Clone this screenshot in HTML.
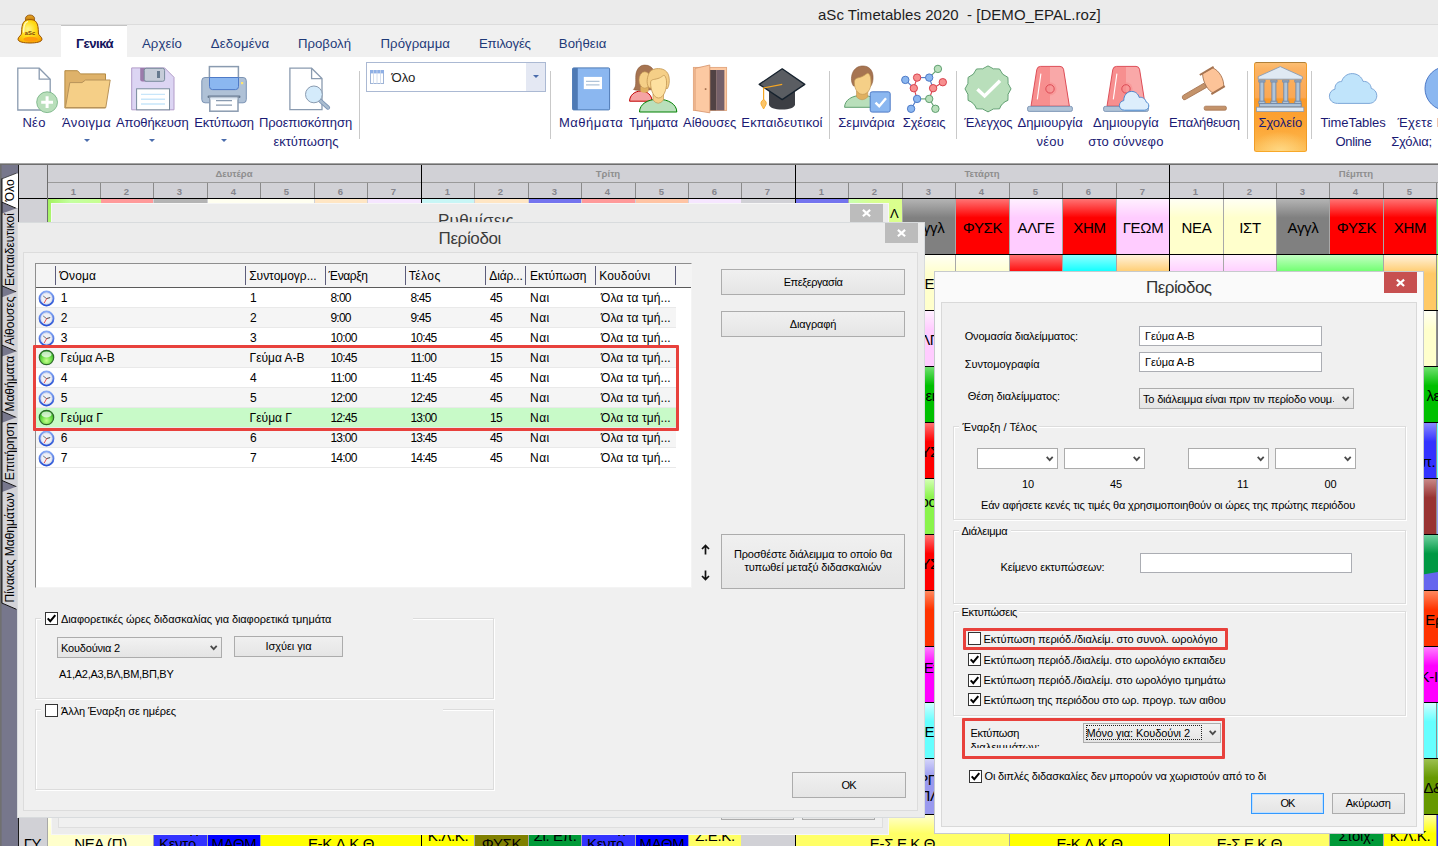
<!DOCTYPE html>
<html lang="el"><head><meta charset="utf-8"><title>aSc Timetables 2020 - [DEMO_EPAL.roz]</title>
<style>

html,body{margin:0;padding:0;}
body{width:1438px;height:846px;overflow:hidden;background:#fff;font-family:"Liberation Sans",sans-serif;}
#app{position:relative;width:1438px;height:846px;overflow:hidden;background:#fff;}
.abs{position:absolute;}
#titlebar{position:absolute;left:0;top:0;width:1438px;height:25px;background:#ebebeb;border-bottom:1px solid #dcdcdc;box-sizing:border-box;}
#titletext{position:absolute;left:818px;top:5px;font-size:15px;line-height:20px;color:#1e1e1e;white-space:pre;letter-spacing:0.03px;}
#tabrow{position:absolute;left:0;top:25px;width:1438px;height:32px;background:#f0f0f0;}
.tab{position:absolute;font-size:13.2px;line-height:17px;color:#1e3a78;white-space:nowrap;}
#tabactive{position:absolute;left:61px;top:0px;width:66px;height:32px;background:#fff;border-top:1px solid #c4c4c4;box-sizing:border-box;}
#ribbon{position:absolute;left:0;top:57px;width:1438px;height:106px;background:#fff;}
.rl{position:absolute;font-size:13px;line-height:19px;color:#1a1a74;white-space:nowrap;}
.rsep{position:absolute;top:14px;width:1px;height:68px;background:#c9c9c9;}
.ricon{position:absolute;}
.dd{position:absolute;width:0;height:0;border-left:3.3px solid transparent;border-right:3.3px solid transparent;border-top:3.3px solid #4a6cac;}
#combo{position:absolute;left:366px;top:5px;width:180px;height:30px;box-sizing:border-box;border:1px solid #abb9d3;background:#fff;}
#combo .btn{position:absolute;right:0;top:0;width:19px;height:28px;background:#e4e8f3;}
#combo .txt{position:absolute;left:24.5px;top:5.6px;font-size:13.2px;line-height:17px;color:#1e1e1e;}
#hl{position:absolute;left:1254px;top:5px;width:53px;height:90px;border-radius:2.5px;border:1px solid #f0a030;box-sizing:border-box;background:radial-gradient(ellipse 60% 22% at 50% 100%,rgba(255,226,150,0.75),rgba(255,226,150,0) 100%),linear-gradient(#fcbe72 0%,#fbb262 7%,#fba854 39%,#fb9a2a 41%,#fca434 70%,#fdbc52 100%);border-color:#b08038 #f09c28 #f8a828 #f09c28;}

#gridtop{position:absolute;left:0;top:163px;width:1438px;height:2px;background:#6e6e6e;border-top:1px solid #a4a4a4;box-sizing:border-box;}
#gridbg{position:absolute;left:0;top:165px;width:1438px;height:681px;background:#d1d1d6;}
.hd{position:absolute;font-weight:bold;color:#8e8e8e;text-align:center;white-space:nowrap;}
.vl{position:absolute;width:1px;}
.hl{position:absolute;height:1px;}
.cell{position:absolute;letter-spacing:-0.35px;font-size:15px;line-height:18px;color:#000;text-align:center;white-space:nowrap;overflow:hidden;box-sizing:border-box;}
.cell span{position:absolute;left:0;right:0;}
.vt{position:absolute;left:0;width:19px;font-size:13px;line-height:19px;color:#000;white-space:nowrap;}

.dlg{position:absolute;background:#ededed;box-sizing:border-box;}
.dlgin{position:absolute;background:#f0f0f0;border:1px solid #dcdcdc;box-sizing:border-box;}
.dtitle{position:absolute;font-size:17px;line-height:22px;color:#3c3c3c;white-space:nowrap;}
.xbtn{position:absolute;background:#bcbcbc;}
.wbtn{position:absolute;box-sizing:border-box;border:1px solid #acacac;background:linear-gradient(#f0f0f0,#e5e5e5);font-size:11px;line-height:13px;color:#000;text-align:center;white-space:nowrap;}
.wbtn span{position:absolute;left:0;right:0;}
.tx{position:absolute;font-size:11px;line-height:14px;color:#000;white-space:nowrap;}
.lt{position:absolute;font-size:12px;line-height:20px;color:#000;white-space:nowrap;}
.gb{position:absolute;box-sizing:border-box;border:1px solid #dcdcdc;box-shadow:1px 1px 0 #fff, inset 1px 1px 0 #fff;}
.cb{position:absolute;width:13px;height:13px;box-sizing:border-box;border:1px solid #333;background:#fff;}
.sel{position:absolute;box-sizing:border-box;border:1px solid #acacac;background:linear-gradient(#f2f2f2,#e4e4e4);}
.inp{position:absolute;box-sizing:border-box;border:1px solid #abadb3;background:#fff;}

.red{position:absolute;box-sizing:border-box;border:3px solid #e8413c;border-radius:1px;}

</style></head>
<body>
<div id="app">
<div id="titlebar"><div id="titletext">aSc Timetables 2020  - [DEMO_EPAL.roz]</div></div>
<div id="tabrow"><div id="tabactive"></div></div>
<div class="tab" style="left:76px;top:34.5px;letter-spacing:-0.503px;font-weight:bold;color:#13135c;">Γενικά</div>
<div class="tab" style="left:142px;top:34.5px;letter-spacing:0.071px;">Αρχείο</div>
<div class="tab" style="left:210.8px;top:34.5px;letter-spacing:0.192px;">Δεδομένα</div>
<div class="tab" style="left:298px;top:34.5px;letter-spacing:0.004px;">Προβολή</div>
<div class="tab" style="left:380.5px;top:34.5px;letter-spacing:0.066px;">Πρόγραμμα</div>
<div class="tab" style="left:479px;top:34.5px;letter-spacing:-0.211px;">Επιλογές</div>
<div class="tab" style="left:558.8px;top:34.5px;letter-spacing:0.038px;">Βοήθεια</div>
<div id="ribbon">
<div id="hl"></div>
<div class="rsep" style="left:359px"></div>
<div class="rsep" style="left:550px"></div>
<div class="rsep" style="left:829px"></div>
<div class="rsep" style="left:956px"></div>
<div class="rsep" style="left:1247px"></div>
<div class="rsep" style="left:1311px"></div>
<div id="combo"><div class="txt">Όλο</div><div class="btn"><div class="dd" style="left:7px;top:12px"></div></div></div>
</div>
<div class="rl" style="left:22.5px;top:113px;letter-spacing:0.226px;">Νέο</div>
<div class="rl" style="left:62px;top:113px;letter-spacing:0.346px;">Άνοιγμα</div>
<div class="rl" style="left:116px;top:113px;letter-spacing:-0.111px;">Αποθήκευση</div>
<div class="rl" style="left:194.3px;top:113px;letter-spacing:-0.264px;">Εκτύπωση</div>
<div class="rl" style="left:259px;top:113px;letter-spacing:-0.118px;">Προεπισκόπηση</div>
<div class="rl" style="left:273.4px;top:132px;letter-spacing:0.011px;">εκτύπωσης</div>
<div class="rl" style="left:559px;top:113px;letter-spacing:0.515px;">Μαθήματα</div>
<div class="rl" style="left:629px;top:113px;letter-spacing:-0.027px;">Τμήματα</div>
<div class="rl" style="left:683px;top:113px;letter-spacing:0.01px;">Αίθουσες</div>
<div class="rl" style="left:741.3px;top:113px;letter-spacing:0.186px;">Εκπαιδευτικοί</div>
<div class="rl" style="left:838.2px;top:113px;letter-spacing:0.063px;">Σεμινάρια</div>
<div class="rl" style="left:902.8px;top:113px;letter-spacing:-0.149px;">Σχέσεις</div>
<div class="rl" style="left:964.2px;top:113px;letter-spacing:-0.096px;">Έλεγχος</div>
<div class="rl" style="left:1017.4px;top:113px;letter-spacing:0.056px;">Δημιουργία</div>
<div class="rl" style="left:1036.6px;top:132px;letter-spacing:0.19px;">νέου</div>
<div class="rl" style="left:1092.9px;top:113px;letter-spacing:0.116px;">Δημιουργία</div>
<div class="rl" style="left:1088.3px;top:132px;letter-spacing:0.172px;">στο σύννεφο</div>
<div class="rl" style="left:1169px;top:113px;letter-spacing:-0.339px;">Επαλήθευση</div>
<div class="rl" style="left:1258.4px;top:113px;letter-spacing:-0.017px;">Σχολείο</div>
<div class="rl" style="left:1320.4px;top:113px;letter-spacing:-0.078px;">TimeTables</div>
<div class="rl" style="left:1335.6px;top:132px;letter-spacing:-0.363px;">Online</div>
<div class="rl" style="left:1391.2px;top:132px;letter-spacing:-0.174px;">Σχόλια;</div>
<div class="rl" style="left:1397.6px;top:113px;letter-spacing:0.3px">Έχετε Ε</div>
<div class="dd" style="left:84px;top:139px"></div>
<div class="dd" style="left:149px;top:139px"></div>
<div class="dd" style="left:221px;top:139px"></div>
<svg class="abs" style="left:14px;top:62px" width="48" height="54" viewBox="14 62 48 54" ><path d="M17.8 68.2H39.2L50.2 79.2V110H17.8Z" fill="#fff" stroke="#8a9bb0" stroke-width="1.3"/>
<path d="M39.2 68.2V79.2H50.2" fill="none" stroke="#8a9bb0" stroke-width="1.3"/>
<circle cx="47.1" cy="102.2" r="10.4" fill="#b9dfbb" stroke="#7ab588" stroke-width="0.9"/>
<path d="M47.1 96.3V108.1M41.2 102.2H53" stroke="#fff" stroke-width="3" fill="none"/></svg>
<svg class="abs" style="left:62px;top:62px" width="52" height="54" viewBox="62 62 52 54" ><path d="M64.9 70.7H77.5L80.5 73.9H105.5V108H64.9Z" fill="#deb26a" stroke="#b48a43" stroke-width="1"/>
<path d="M65.4 107.5L69.8 82.6H82L85.5 80H110.2L105.8 107.5Z" fill="#f5cf87" stroke="#b8935a" stroke-width="1"/></svg>
<svg class="abs" style="left:129px;top:62px" width="48" height="54" viewBox="129 62 48 54" ><path d="M131.7 67.9H164.6L174 77.3V109.8H131.7Z" fill="#dcd5f3" stroke="#b29cc9" stroke-width="1"/>
<path d="M140.2 67.9H147V81.5H142.2Q140.2 81.5 140.2 79.5Z" fill="#9c7bab"/>
<rect x="144.2" y="68.3" width="20.4" height="13" rx="2" fill="#c6ccd9" stroke="#788b9c" stroke-width="1"/>
<rect x="157" y="71" width="3" height="7" fill="#66798f"/>
<rect x="136.6" y="88.8" width="32.9" height="21" fill="#fff" stroke="#788b9c" stroke-width="1"/>
<path d="M141 94.4H165M141 99.2H165M141 104H165" stroke="#c8e6fa" stroke-width="1.4" fill="none"/></svg>
<svg class="abs" style="left:199px;top:62px" width="50" height="54" viewBox="199 62 50 54" ><rect x="209.4" y="66.6" width="29" height="14" fill="#fff" stroke="#8a9bb0" stroke-width="1.5"/>
<rect x="201.8" y="77.5" width="44.5" height="25.3" rx="3.2" fill="#afc1d6" stroke="#7b93b4" stroke-width="1"/>
<path d="M209.5 77.5H238.5V86.5Q238.5 89.6 235.5 89.6H212.5Q209.5 89.6 209.5 86.5Z" fill="#8bb7f0" stroke="#4e7ac7" stroke-width="1"/>
<rect x="241" y="82" width="2.2" height="2.2" fill="#ffe66e"/>
<rect x="207.5" y="95.6" width="33" height="2.4" rx="1.2" fill="#66798f"/>
<rect x="209.8" y="97" width="28.2" height="14.2" fill="#fff" stroke="#8a9bb0" stroke-width="1.5"/>
<rect x="210.4" y="97.6" width="27" height="2" fill="#dfe9f3"/>
<path d="M216 100.6H232M216 105.2H232" stroke="#8a9bb0" stroke-width="1.2" fill="none"/></svg>
<svg class="abs" style="left:286px;top:62px" width="48" height="54" viewBox="286 62 48 54" ><path d="M289.9 68.2H311.6L322 78.6V109.6H289.9Z" fill="#fff" stroke="#8a9bb0" stroke-width="1.3"/>
<path d="M311.6 68.2V78.6H322" fill="none" stroke="#8a9bb0" stroke-width="1.3"/>
<path d="M319.5 100L328 107.6" stroke="#7b93b4" stroke-width="4.2" stroke-linecap="round" fill="none"/>
<path d="M319.5 100L328 107.6" stroke="#a9bccf" stroke-width="2.6" stroke-linecap="round" fill="none"/>
<circle cx="313.9" cy="94.4" r="8.4" fill="#d4ebfb" stroke="#8a9bb0" stroke-width="1"/></svg>
<svg class="abs" style="left:570px;top:62px" width="44" height="54" viewBox="570 62 44 54" ><rect x="572.6" y="67.9" width="37" height="42" rx="1" fill="#8bb7f0" stroke="#4e7ab5" stroke-width="1"/>
<path d="M572.6 68.9Q572.6 67.9 573.6 67.9H577.8V109.9H573.6Q572.6 109.9 572.6 108.9Z" fill="#4e7ab5"/>
<rect x="583.8" y="76.9" width="18.2" height="12.2" fill="#fff"/>
<path d="M586 81.3H599.5M586 84.8H599.5" stroke="#b0c4d8" stroke-width="1.3" fill="none"/></svg>
<svg class="abs" style="left:627px;top:62px" width="52" height="54" viewBox="627 62 52 54" ><path d="M629.6 101.2C629.6 95 635 91 641 91C647 91 652 95 652 101.2Z" fill="#f5a3a3" stroke="#c00000" stroke-width="1"/>
<path d="M633.4 89.4C636.8 87 635.4 80 635.8 75.5C636.3 69.5 639.5 65.3 644.5 65.1C649 65 652 67 653.6 70.5C655 75 653.5 84 654 89C650 90.5 637 91 633.4 89.4Z" fill="#a67451" stroke="#8a5a3a" stroke-width="0.6"/>
<path d="M640.5 86.5V91.5Q644.5 94 648.5 91.5V86.5Z" fill="#e0b060"/>
<ellipse cx="644.8" cy="80" rx="5.8" ry="8.2" fill="#f5cf87" stroke="#c29653" stroke-width="0.6"/>
<path d="M639.5 112C639.5 104 648 99.2 658 99.2C668 99.2 676.8 104 676.8 112Z" fill="#b9dfbb" stroke="#008000" stroke-width="1"/>
<path d="M653 94V100Q658.2 106.5 663.5 100V94Z" fill="#f5cf87" stroke="#c29653" stroke-width="0.7"/>
<path d="M649.5 88C646 85 647 78 648.5 74.5C650 70 654 68.6 658.5 68.6C664 68.6 668 71.5 669 77C669.8 81.5 669 86 667.5 88.5Z" fill="#f5cf87" stroke="#c29653" stroke-width="0.8"/>
<path d="M650.6 83C650.6 79 653 80 658 78.5C662 77.3 663.5 74.5 664.5 75.5C666 77 666.6 80 666.6 83C666.6 90 663.5 98 658.6 98C653.6 98 650.6 90 650.6 83Z" fill="#fde0a0" stroke="#c29653" stroke-width="0.8"/></svg>
<svg class="abs" style="left:690px;top:62px" width="40" height="54" viewBox="690 62 40 54" ><rect x="693.4" y="67.4" width="33.2" height="43" fill="#fcc9a2" stroke="#e2a57c" stroke-width="0.9"/>
<rect x="709.8" y="70" width="6.4" height="40.4" fill="#514244"/>
<rect x="716.2" y="70" width="8.2" height="40.4" fill="#74606a"/>
<path d="M695 68.4L709.8 65V112.8L695 110.4Z" fill="#fcc9a2" stroke="#d99a73" stroke-width="0.9"/>
<rect x="704.8" y="88.2" width="1.6" height="1.8" fill="#a5714f"/></svg>
<svg class="abs" style="left:756px;top:62px" width="52" height="54" viewBox="756 62 52 54" ><path d="M769 90V104.5C769 107.5 775 109.6 782 109.6C789 109.6 795 107.5 795 104.5V90Z" fill="#3c3e44"/>
<path d="M782.2 68.8L804.8 84.4L782.2 99.6L759.2 84.4Z" fill="#5a5d62" stroke="#16222e" stroke-width="1.3" stroke-linejoin="round"/>
<path d="M782.2 84.4L763.6 88V100" fill="none" stroke="#f5a623" stroke-width="1.2"/>
<path d="M763.6 99.5C761 101 760.3 103 761.4 105L763.6 109L765.8 105C766.9 103 766.2 101 763.6 99.5Z" fill="#fbc56a" stroke="#f5a623" stroke-width="0.8"/></svg>
<svg class="abs" style="left:842px;top:62px" width="52" height="54" viewBox="842 62 52 54" ><path d="M844.6 107.3C844.6 100 852 95.4 862 95.4C872 95.4 879 100 879 107.3Z" fill="#b9dfbb" stroke="#5f9f70" stroke-width="1"/>
<path d="M856.5 91V97Q862 102.5 867.8 97V91Z" fill="#e0b060" stroke="#c29653" stroke-width="0.6"/>
<path d="M853.5 86C850.5 82 851 75 853.5 71C856 67 860 65.8 863.5 66C869 66.3 872.6 70 873 76C873.3 80 872.5 84 870.5 86.5Z" fill="#a67451" stroke="#8a5a3a" stroke-width="0.6"/>
<path d="M854.4 83C854.4 78 856.5 78.5 861 77C865.5 75.5 867 72.5 868.5 73.5C870.5 75 871 79 871 83C871 89 867.5 94.4 862.6 94.4C857.8 94.4 854.4 89 854.4 83Z" fill="#f5cf87" stroke="#c29653" stroke-width="0.7"/>
<rect x="870.2" y="91.8" width="20" height="20.3" rx="2" fill="#8bb7f0" stroke="#4e7ac7" stroke-width="1"/>
<path d="M875.5 102.6L879.2 106.2L886 98.2" fill="none" stroke="#fff" stroke-width="2.4"/></svg>
<svg class="abs" style="left:899px;top:62px" width="50" height="54" viewBox="899 62 50 54" ><path d="M917.1 77.6L929.2 77.6" stroke="#4e7ac7" stroke-width="1.1" fill="none"/><path d="M905.3 79.9L913.8 88.2" stroke="#4e7ac7" stroke-width="1.1" fill="none"/><path d="M917.1 77.6L913.8 88.2" stroke="#d9434e" stroke-width="1.1" fill="none"/><path d="M929.2 77.6L937.9 68.9" stroke="#5f9f70" stroke-width="1.1" fill="none"/><path d="M929.2 77.6L933.1 88.2" stroke="#4e7ac7" stroke-width="1.1" fill="none"/><path d="M933.1 88.2L942.8 82.2" stroke="#d9434e" stroke-width="1.1" fill="none"/><path d="M913.8 88.2L917.1 98.9" stroke="#d9434e" stroke-width="1.1" fill="none"/><path d="M933.1 88.2L929.2 98.9" stroke="#d9434e" stroke-width="1.1" fill="none"/><path d="M917.1 98.9L929.2 98.9" stroke="#5f9f70" stroke-width="1.1" fill="none"/><path d="M917.1 98.9L911.1 108.8" stroke="#4e7ac7" stroke-width="1.1" fill="none"/><path d="M929.2 98.9L935.4 108.8" stroke="#5f9f70" stroke-width="1.1" fill="none"/><circle cx="937.9" cy="68.9" r="3.7" fill="#b9dfbb" stroke="#5f9f70" stroke-width="1"/><circle cx="917.1" cy="77.6" r="3.7" fill="#f78f8f" stroke="#d9434e" stroke-width="1"/><circle cx="929.2" cy="77.6" r="3.7" fill="#8bb7f0" stroke="#4e7ac7" stroke-width="1"/><circle cx="905.3" cy="79.9" r="3.7" fill="#8bb7f0" stroke="#4e7ac7" stroke-width="1"/><circle cx="942.8" cy="82.2" r="3.7" fill="#f78f8f" stroke="#d9434e" stroke-width="1"/><circle cx="913.8" cy="88.2" r="3.7" fill="#f78f8f" stroke="#d9434e" stroke-width="1"/><circle cx="933.1" cy="88.2" r="3.7" fill="#f78f8f" stroke="#d9434e" stroke-width="1"/><circle cx="917.1" cy="98.9" r="3.7" fill="#8bb7f0" stroke="#4e7ac7" stroke-width="1"/><circle cx="929.2" cy="98.9" r="3.7" fill="#b9dfbb" stroke="#5f9f70" stroke-width="1"/><circle cx="911.1" cy="108.8" r="3.7" fill="#8bb7f0" stroke="#4e7ac7" stroke-width="1"/><circle cx="935.4" cy="108.8" r="3.7" fill="#b9dfbb" stroke="#5f9f70" stroke-width="1"/></svg>
<svg class="abs" style="left:962px;top:62px" width="52" height="54" viewBox="962 62 52 54" ><path d="M988.0 65.9Q993.0 70.2 999.5 69.0Q1001.7 75.2 1007.9 77.4Q1006.7 83.9 1011.0 88.9Q1006.7 93.9 1007.9 100.4Q1001.7 102.6 999.5 108.8Q993.0 107.6 988.0 111.9Q983.0 107.6 976.5 108.8Q974.3 102.6 968.1 100.4Q969.3 93.9 965.0 88.9Q969.3 83.9 968.1 77.4Q974.3 75.2 976.5 69.0Q983.0 70.2 988.0 65.9Z" fill="#b9dfbb" stroke="#5f9f70" stroke-width="1" stroke-linejoin="round"/><path d="M977.4 89.2L984.6 96L1000 80.8" fill="none" stroke="#fff" stroke-width="3.4"/></svg>
<svg class="abs" style="left:1025px;top:62px" width="50" height="54" viewBox="1025 62 50 54" ><path d="M1031 106.2L1036.8 69.5Q1037.4 66.4 1040.5 66.4H1060Q1063 66.4 1063.6 69.5L1069.4 106.2Z" fill="#f78f8f"/>
<path d="M1050 66.4H1060Q1063 66.4 1063.6 69.5L1069.4 106.2H1050Z" fill="#f9a8a8"/>
<circle cx="1050" cy="88.9" r="6.6" fill="#f78f8f" opacity="0.6"/>
<circle cx="1050" cy="88.9" r="4.2" fill="none" stroke="#d9434e" stroke-width="0.9"/>
<path d="M1031 106.2L1036.8 69.5Q1037.4 66.4 1040.5 66.4H1060Q1063 66.4 1063.6 69.5L1069.4 106.2Z" fill="none" stroke="#d9434e" stroke-width="0.9"/>
<path d="M1040.9 73.6L1037.3 99.3" stroke="#fff" stroke-width="1.1" fill="none"/>
<rect x="1027.6" y="106.4" width="44.8" height="5" rx="1.6" fill="#b0c4d8" stroke="#7b93b4" stroke-width="0.9"/></svg>
<svg class="abs" style="left:1101px;top:62px" width="52" height="54" viewBox="1101 62 52 54" ><path d="M1107 106.2L1112.8 69.5Q1113.4 66.4 1116.5 66.4H1136Q1139 66.4 1139.6 69.5L1145.4 106.2Z" fill="#f78f8f"/>
<path d="M1126 66.4H1136Q1139 66.4 1139.6 69.5L1145.4 106.2H1126Z" fill="#f9a8a8"/>
<circle cx="1126" cy="88.9" r="6.6" fill="#f78f8f" opacity="0.6"/>
<circle cx="1126" cy="88.9" r="4.2" fill="none" stroke="#d9434e" stroke-width="0.9"/>
<path d="M1107 106.2L1112.8 69.5Q1113.4 66.4 1116.5 66.4H1136Q1139 66.4 1139.6 69.5L1145.4 106.2Z" fill="none" stroke="#d9434e" stroke-width="0.9"/>
<path d="M1116.9 73.6L1113.3 99.3" stroke="#fff" stroke-width="1.1" fill="none"/>
<rect x="1103.6" y="106.4" width="44.8" height="5" rx="1.6" fill="#b0c4d8" stroke="#7b93b4" stroke-width="0.9"/><path d="M1124.5 110.2C1120.8 110.2 1119.4 107.6 1119.4 105.4C1119.4 103 1121.2 101 1123.8 100.6C1123.6 95.6 1127 91.4 1131.6 91.4C1135.4 91.4 1138.2 93.8 1139.2 97.4C1142.6 96.8 1145.4 98.8 1146 101.8C1148 102.6 1148.8 104.2 1148.8 106C1148.8 108.4 1147 110.2 1144.4 110.2Z" fill="#ddeefc" stroke="#4e8ad0" stroke-width="1"/></svg>
<svg class="abs" style="left:1180px;top:62px" width="50" height="54" viewBox="1180 62 50 54" ><path d="M1185.2 99.6L1206.6 87.4L1204 83.2L1183.4 95.2Q1181.6 96.6 1182.6 98.6Q1183.6 100.4 1185.2 99.6Z" fill="#c4936a" stroke="#a67451" stroke-width="0.9"/>
<path d="M1202.6 73.6L1212.6 67.8C1219.4 70.6 1224.4 79.4 1223.6 87L1213.6 92.8C1208.6 92 1202.6 82 1202.6 73.6Z" fill="#fcc398" stroke="#a67451" stroke-width="0.9"/>
<path d="M1199.8 75L1213.6 66.9" stroke="#a67451" stroke-width="2" fill="none"/>
<path d="M1211.4 94.2L1224.8 86.2" stroke="#a67451" stroke-width="2" fill="none"/>
<rect x="1204.2" y="106.2" width="22.2" height="4" rx="1.5" fill="#c4936a" stroke="#a67451" stroke-width="0.8"/></svg>
<svg class="abs" style="left:1255px;top:62px" width="50" height="54" viewBox="1255 62 50 54" ><path d="M1258.2 79.2V76.6L1280.3 66.6L1302.4 76.6V79.2Z" fill="#dfe9f3" stroke="#8a9bb0" stroke-width="0.9"/><rect x="1258.8000000000002" y="80.2" width="6.2" height="1.8" fill="#b0c4d8" stroke="#6f87a8" stroke-width="0.8"/><rect x="1259.9" y="82" width="4" height="19.4" fill="#b0c4d8" stroke="#6f87a8" stroke-width="0.9"/><rect x="1258.8000000000002" y="101.2" width="6.2" height="2.2" fill="#b0c4d8" stroke="#6f87a8" stroke-width="0.8"/><rect x="1270.8000000000002" y="80.2" width="6.2" height="1.8" fill="#b0c4d8" stroke="#6f87a8" stroke-width="0.8"/><rect x="1271.9" y="82" width="4" height="19.4" fill="#b0c4d8" stroke="#6f87a8" stroke-width="0.9"/><rect x="1270.8000000000002" y="101.2" width="6.2" height="2.2" fill="#b0c4d8" stroke="#6f87a8" stroke-width="0.8"/><rect x="1282.7" y="80.2" width="6.2" height="1.8" fill="#b0c4d8" stroke="#6f87a8" stroke-width="0.8"/><rect x="1283.8" y="82" width="4" height="19.4" fill="#b0c4d8" stroke="#6f87a8" stroke-width="0.9"/><rect x="1282.7" y="101.2" width="6.2" height="2.2" fill="#b0c4d8" stroke="#6f87a8" stroke-width="0.8"/><rect x="1294.8000000000002" y="80.2" width="6.2" height="1.8" fill="#b0c4d8" stroke="#6f87a8" stroke-width="0.8"/><rect x="1295.9" y="82" width="4" height="19.4" fill="#b0c4d8" stroke="#6f87a8" stroke-width="0.9"/><rect x="1294.8000000000002" y="101.2" width="6.2" height="2.2" fill="#b0c4d8" stroke="#6f87a8" stroke-width="0.8"/><rect x="1259.4" y="103.6" width="41.8" height="3.2" fill="#b0c4d8" stroke="#6f87a8" stroke-width="0.9"/><rect x="1256.6" y="107.2" width="47.2" height="4.2" fill="#dfe9f3" stroke="#8a9bb0" stroke-width="0.8"/></svg>
<svg class="abs" style="left:1327px;top:62px" width="52" height="54" viewBox="1327 62 52 54" ><path d="M1337.5 103.4C1332.4 103.4 1329.4 100 1329.4 96.2C1329.4 92.6 1331.8 89.8 1335 89.2C1334.6 84.4 1338 81.2 1341.6 81.6C1343 76.8 1347.2 73.6 1352.2 73.6C1357.6 73.6 1361.8 77 1363 81.4C1367.6 81 1371 84.2 1371.2 88.4C1374.6 89.2 1376.8 92.2 1376.8 95.6C1376.8 100 1373.6 103.4 1369 103.4Z" fill="#c0e4fb" stroke="#7fa8d8" stroke-width="1"/></svg>
<svg class="abs" style="left:1420px;top:62px" width="18" height="54" viewBox="1420 62 18 54" ><circle cx="1447" cy="88.5" r="22" fill="#8bb7f0" stroke="#4e7ac7" stroke-width="1"/></svg>
<svg class="abs" style="left:368px;top:68px" width="18" height="18" viewBox="368 68 18 18" ><rect x="370.5" y="70.5" width="13" height="13" fill="#fff" stroke="#9fb4d6" stroke-width="1"/>
<rect x="370" y="70" width="14" height="3.4" fill="#8fb0e6"/>
<path d="M373.5 70V84M377 70V84M380.5 70V84" stroke="#c9d6ea" stroke-width="0.8" fill="none"/></svg>
<svg class="abs" style="left:14px;top:12px" width="32" height="34" viewBox="14 12 32 34" ><defs><radialGradient id="bg1" cx="0.42" cy="0.4" r="0.8"><stop offset="0" stop-color="#fff68a"/><stop offset="0.4" stop-color="#ffdc18"/><stop offset="0.85" stop-color="#f8a400"/><stop offset="1" stop-color="#e88600"/></radialGradient>
<linearGradient id="bg2" x1="0" y1="0" x2="0" y2="1"><stop offset="0" stop-color="#eaa828"/><stop offset="1" stop-color="#b46c00"/></linearGradient></defs>
<ellipse cx="30" cy="18.7" rx="4.6" ry="3.7" fill="url(#bg2)" stroke="#8a4a00" stroke-width="0.8"/>
<path d="M21.6 33 C21.6 22.5 24 19.6 30 19.6 C36 19.6 38.4 22.5 38.4 33 C38.4 35.6 42 36.6 42 39.2 C42 42 36 43 30 43 C24 43 18 42 18 39.2 C18 36.6 21.6 35.6 21.6 33 Z" fill="url(#bg1)" stroke="#9a5200" stroke-width="1"/>
<ellipse cx="30.6" cy="39.2" rx="7.2" ry="2.5" fill="#ff960c" opacity="0.9"/>
<path d="M23.6 32C23.6 25.5 24.8 22.4 27.4 21.6" fill="none" stroke="#fffbd0" stroke-width="1.5" stroke-linecap="round" opacity="0.85"/>
<text x="30" y="35.2" font-family="Liberation Sans, sans-serif" font-size="5.8" font-weight="bold" fill="#7a3c08" text-anchor="middle">aSc</text></svg><div id="gridtop"></div><div id="gridbg"></div>
<svg class="abs" style="left:0;top:165px" width="19" height="681" viewBox="0 165 19 681"><rect x="0" y="165" width="19" height="681" fill="#77778c"/><rect x="0" y="165" width="1.6" height="681" fill="#707070"/><path d="M18 173.6L16 173.6L2 178.79999999999998V202.4L16 208.4L18 208.4Z" fill="#ffffff"/><path d="M2 202.20000000000002L16.4 208.4" stroke="#111" stroke-width="1" fill="none"/><path d="M2 178.79999999999998L16.4 173.2" stroke="#333" stroke-width="0.8" fill="none"/><path d="M18 208.4L16 208.4L2 213.6V286L16 292L18 292Z" fill="#d3d3d8"/><path d="M2 285.8L16.4 292" stroke="#111" stroke-width="1" fill="none"/><path d="M18 292L16 292L2 297.2V345.4L16 351.4L18 351.4Z" fill="#d3d3d8"/><path d="M2 345.2L16.4 351.4" stroke="#111" stroke-width="1" fill="none"/><path d="M18 351.4L16 351.4L2 356.59999999999997V411.5L16 417.5L18 417.5Z" fill="#d3d3d8"/><path d="M2 411.3L16.4 417.5" stroke="#111" stroke-width="1" fill="none"/><path d="M18 417.5L16 417.5L2 422.7V480.7L16 486.7L18 486.7Z" fill="#d3d3d8"/><path d="M2 480.5L16.4 486.7" stroke="#111" stroke-width="1" fill="none"/><path d="M18 486.7L16 486.7L2 491.9V603.3L16 609.3L18 609.3Z" fill="#d3d3d8"/><path d="M2 603.0999999999999L16.4 609.3" stroke="#111" stroke-width="1" fill="none"/><path d="M1.9 178.6V603.3" stroke="#111" stroke-width="1.1" fill="none"/><rect x="18" y="165" width="1" height="681" fill="#1a1a1a"/><text x="0" y="0" transform="translate(13.8 190.3) rotate(-90)" text-anchor="middle" font-family="Liberation Sans, sans-serif" font-size="12" fill="#000">Όλο</text><text x="0" y="0" transform="translate(13.8 249.5) rotate(-90)" text-anchor="middle" font-family="Liberation Sans, sans-serif" font-size="12" fill="#000">Εκπαιδευτικοί</text><text x="0" y="0" transform="translate(13.8 321.0) rotate(-90)" text-anchor="middle" font-family="Liberation Sans, sans-serif" font-size="12" fill="#000">Αίθουσες</text><text x="0" y="0" transform="translate(13.8 383.75) rotate(-90)" text-anchor="middle" font-family="Liberation Sans, sans-serif" font-size="12" fill="#000">Μαθήματα</text><text x="0" y="0" transform="translate(13.8 451.40000000000003) rotate(-90)" text-anchor="middle" font-family="Liberation Sans, sans-serif" font-size="12" fill="#000">Επιτήρηση</text><text x="0" y="0" transform="translate(13.8 547.3) rotate(-90)" text-anchor="middle" font-family="Liberation Sans, sans-serif" font-size="12" fill="#000">Πίνακας Μαθημάτων</text></svg>
<div class="hd" style="left:47px;top:167.9px;width:374px;font-size:9.5px;line-height:12px">Δευτέρα</div>
<div class="hd" style="left:47px;top:185.8px;width:53px;font-size:9.5px;line-height:12px;color:#85858c">1</div>
<div class="hd" style="left:100px;top:185.8px;width:53px;font-size:9.5px;line-height:12px;color:#85858c">2</div>
<div class="vl" style="left:100px;top:183px;height:15px;background:#8a8a8a"></div>
<div class="hd" style="left:153px;top:185.8px;width:53px;font-size:9.5px;line-height:12px;color:#85858c">3</div>
<div class="vl" style="left:153px;top:183px;height:15px;background:#8a8a8a"></div>
<div class="hd" style="left:207px;top:185.8px;width:53px;font-size:9.5px;line-height:12px;color:#85858c">4</div>
<div class="vl" style="left:207px;top:183px;height:15px;background:#8a8a8a"></div>
<div class="hd" style="left:260px;top:185.8px;width:53px;font-size:9.5px;line-height:12px;color:#85858c">5</div>
<div class="vl" style="left:260px;top:183px;height:15px;background:#8a8a8a"></div>
<div class="hd" style="left:314px;top:185.8px;width:53px;font-size:9.5px;line-height:12px;color:#85858c">6</div>
<div class="vl" style="left:314px;top:183px;height:15px;background:#8a8a8a"></div>
<div class="hd" style="left:367px;top:185.8px;width:53px;font-size:9.5px;line-height:12px;color:#85858c">7</div>
<div class="vl" style="left:367px;top:183px;height:15px;background:#8a8a8a"></div>
<div class="hd" style="left:421px;top:167.9px;width:374px;font-size:9.5px;line-height:12px">Τρίτη</div>
<div class="hd" style="left:421px;top:185.8px;width:53px;font-size:9.5px;line-height:12px;color:#85858c">1</div>
<div class="hd" style="left:474px;top:185.8px;width:53px;font-size:9.5px;line-height:12px;color:#85858c">2</div>
<div class="vl" style="left:474px;top:183px;height:15px;background:#8a8a8a"></div>
<div class="hd" style="left:528px;top:185.8px;width:53px;font-size:9.5px;line-height:12px;color:#85858c">3</div>
<div class="vl" style="left:528px;top:183px;height:15px;background:#8a8a8a"></div>
<div class="hd" style="left:581px;top:185.8px;width:53px;font-size:9.5px;line-height:12px;color:#85858c">4</div>
<div class="vl" style="left:581px;top:183px;height:15px;background:#8a8a8a"></div>
<div class="hd" style="left:635px;top:185.8px;width:53px;font-size:9.5px;line-height:12px;color:#85858c">5</div>
<div class="vl" style="left:635px;top:183px;height:15px;background:#8a8a8a"></div>
<div class="hd" style="left:688px;top:185.8px;width:53px;font-size:9.5px;line-height:12px;color:#85858c">6</div>
<div class="vl" style="left:688px;top:183px;height:15px;background:#8a8a8a"></div>
<div class="hd" style="left:741px;top:185.8px;width:53px;font-size:9.5px;line-height:12px;color:#85858c">7</div>
<div class="vl" style="left:741px;top:183px;height:15px;background:#8a8a8a"></div>
<div class="hd" style="left:795px;top:167.9px;width:374px;font-size:9.5px;line-height:12px">Τετάρτη</div>
<div class="hd" style="left:795px;top:185.8px;width:53px;font-size:9.5px;line-height:12px;color:#85858c">1</div>
<div class="hd" style="left:848px;top:185.8px;width:53px;font-size:9.5px;line-height:12px;color:#85858c">2</div>
<div class="vl" style="left:848px;top:183px;height:15px;background:#8a8a8a"></div>
<div class="hd" style="left:902px;top:185.8px;width:53px;font-size:9.5px;line-height:12px;color:#85858c">3</div>
<div class="vl" style="left:902px;top:183px;height:15px;background:#8a8a8a"></div>
<div class="hd" style="left:955px;top:185.8px;width:53px;font-size:9.5px;line-height:12px;color:#85858c">4</div>
<div class="vl" style="left:955px;top:183px;height:15px;background:#8a8a8a"></div>
<div class="hd" style="left:1009px;top:185.8px;width:53px;font-size:9.5px;line-height:12px;color:#85858c">5</div>
<div class="vl" style="left:1009px;top:183px;height:15px;background:#8a8a8a"></div>
<div class="hd" style="left:1062px;top:185.8px;width:53px;font-size:9.5px;line-height:12px;color:#85858c">6</div>
<div class="vl" style="left:1062px;top:183px;height:15px;background:#8a8a8a"></div>
<div class="hd" style="left:1116px;top:185.8px;width:53px;font-size:9.5px;line-height:12px;color:#85858c">7</div>
<div class="vl" style="left:1116px;top:183px;height:15px;background:#8a8a8a"></div>
<div class="hd" style="left:1169px;top:167.9px;width:374px;font-size:9.5px;line-height:12px">Πέμπτη</div>
<div class="hd" style="left:1169px;top:185.8px;width:53px;font-size:9.5px;line-height:12px;color:#85858c">1</div>
<div class="hd" style="left:1223px;top:185.8px;width:53px;font-size:9.5px;line-height:12px;color:#85858c">2</div>
<div class="vl" style="left:1223px;top:183px;height:15px;background:#8a8a8a"></div>
<div class="hd" style="left:1276px;top:185.8px;width:53px;font-size:9.5px;line-height:12px;color:#85858c">3</div>
<div class="vl" style="left:1276px;top:183px;height:15px;background:#8a8a8a"></div>
<div class="hd" style="left:1329px;top:185.8px;width:53px;font-size:9.5px;line-height:12px;color:#85858c">4</div>
<div class="vl" style="left:1329px;top:183px;height:15px;background:#8a8a8a"></div>
<div class="hd" style="left:1383px;top:185.8px;width:53px;font-size:9.5px;line-height:12px;color:#85858c">5</div>
<div class="vl" style="left:1383px;top:183px;height:15px;background:#8a8a8a"></div>
<div class="hd" style="left:1436px;top:185.8px;width:53px;font-size:9.5px;line-height:12px;color:#85858c">6</div>
<div class="vl" style="left:1436px;top:183px;height:15px;background:#8a8a8a"></div>
<div class="hl" style="left:47px;top:182px;width:1391px;background:#9a9a9a"></div>
<div class="hl" style="left:19px;top:198px;width:1419px;background:#000"></div>
<div class="vl" style="left:47px;top:165px;height:681px;background:#6e6e6e"></div>
<div class="hl" style="left:19px;top:254px;width:1419px;background:#000"></div>
<div class="hl" style="left:19px;top:310px;width:1419px;background:#000"></div>
<div class="hl" style="left:19px;top:366px;width:1419px;background:#000"></div>
<div class="hl" style="left:19px;top:422px;width:1419px;background:#000"></div>
<div class="hl" style="left:19px;top:478px;width:1419px;background:#000"></div>
<div class="hl" style="left:19px;top:534px;width:1419px;background:#000"></div>
<div class="hl" style="left:19px;top:590px;width:1419px;background:#000"></div>
<div class="hl" style="left:19px;top:646px;width:1419px;background:#000"></div>
<div class="hl" style="left:19px;top:702px;width:1419px;background:#000"></div>
<div class="hl" style="left:19px;top:758px;width:1419px;background:#000"></div>
<div class="hl" style="left:19px;top:814px;width:1419px;background:#000"></div>
<div class="abs" style="left:48px;top:199px;width:52px;height:5px;background:#b8ff88"></div>
<div class="abs" style="left:101px;top:199px;width:52px;height:5px;background:#ff9a9a"></div>
<div class="abs" style="left:154px;top:199px;width:53px;height:5px;background:#b4b4b4"></div>
<div class="abs" style="left:208px;top:199px;width:52px;height:5px;background:#fffff0"></div>
<div class="abs" style="left:260px;top:199px;width:54px;height:5px;background:#fffff0"></div>
<div class="abs" style="left:315px;top:199px;width:52px;height:5px;background:#ffe6c4"></div>
<div class="abs" style="left:368px;top:199px;width:53px;height:5px;background:#f6e6ff"></div>
<div class="abs" style="left:422px;top:199px;width:52px;height:5px;background:#c8f6f6"></div>
<div class="abs" style="left:475px;top:199px;width:53px;height:5px;background:#ffe6c4"></div>
<div class="abs" style="left:529px;top:199px;width:52px;height:5px;background:#7474ee"></div>
<div class="abs" style="left:582px;top:199px;width:53px;height:5px;background:#ff9a9a"></div>
<div class="abs" style="left:636px;top:199px;width:52px;height:5px;background:#ffc4a4"></div>
<div class="abs" style="left:689px;top:199px;width:52px;height:5px;background:#f6e6ff"></div>
<div class="abs" style="left:742px;top:199px;width:53px;height:5px;background:#d1d1d6"></div>
<div class="abs" style="left:796px;top:199px;width:52px;height:5px;background:#7474ee"></div>
<div class="abs" style="left:849px;top:199px;width:53px;height:5px;background:#d4ffb4"></div>
<div class="abs" style="left:48px;top:199px;width:53px;height:24px;background:linear-gradient(100deg,#a4f060 0%,#a8f468 6%,#c4ffa0 40%,#c8ff90 100%)"></div>
<div class="cell" style="left:848px;top:199px;width:54px;height:55px;background:linear-gradient(#ecffc8 0%,#d8ff90 34%,#d8ff90 100%);border-left:1px solid #a8a8a8;background:linear-gradient(100deg,#c8ffb0 0%,#d8ff90 40%,#dcff8c 100%);"></div>
<div class="abs" style="left:890px;top:205.6px;font-size:13px;line-height:15px;color:#000">Λ</div>
<div class="cell" style="left:902px;top:199px;width:53px;height:55px;background:linear-gradient(#b4b4b4 0%,#808080 34%,#808080 100%);border-left:1px solid #a8a8a8;"><span style="top:20px;left:0px;right:0px">Αγγλ</span></div>
<div class="cell" style="left:955px;top:199px;width:54px;height:55px;background:linear-gradient(#ff7474 0%,#ff0000 34%,#ff0000 100%);border-left:1px solid #a8a8a8;"><span style="top:20px;left:0px;right:0px">ΦΥΣΚ</span></div>
<div class="cell" style="left:1009px;top:199px;width:53px;height:55px;background:linear-gradient(#fff0ff 0%,#ffccff 34%,#ffccff 100%);border-left:1px solid #a8a8a8;"><span style="top:20px;left:0px;right:0px">ΑΛΓΕ</span></div>
<div class="cell" style="left:1062px;top:199px;width:54px;height:55px;background:linear-gradient(#ff7474 0%,#ff0000 34%,#ff0000 100%);border-left:1px solid #a8a8a8;"><span style="top:20px;left:0px;right:0px">ΧΗΜ</span></div>
<div class="cell" style="left:1116px;top:199px;width:53px;height:55px;background:linear-gradient(#fff0ff 0%,#ffccff 34%,#ffccff 100%);border-left:1px solid #a8a8a8;"><span style="top:20px;left:0px;right:0px">ΓΕΩΜ</span></div>
<div class="cell" style="left:1169px;top:199px;width:54px;height:55px;background:linear-gradient(#fffff4 0%,#ffffcc 34%,#ffffcc 100%);border-left:1px solid #a8a8a8;"><span style="top:20px;left:0px;right:0px">ΝΕΑ</span></div>
<div class="cell" style="left:1223px;top:199px;width:53px;height:55px;background:linear-gradient(#fffff4 0%,#ffffcc 34%,#ffffcc 100%);border-left:1px solid #a8a8a8;"><span style="top:20px;left:0px;right:0px">ΙΣΤ</span></div>
<div class="cell" style="left:1276px;top:199px;width:53px;height:55px;background:linear-gradient(#b4b4b4 0%,#808080 34%,#808080 100%);border-left:1px solid #a8a8a8;"><span style="top:20px;left:0px;right:0px">Αγγλ</span></div>
<div class="cell" style="left:1329px;top:199px;width:54px;height:55px;background:linear-gradient(#ff7474 0%,#ff0000 34%,#ff0000 100%);border-left:1px solid #a8a8a8;"><span style="top:20px;left:0px;right:0px">ΦΥΣΚ</span></div>
<div class="cell" style="left:1383px;top:199px;width:53px;height:55px;background:linear-gradient(#ff7474 0%,#ff0000 34%,#ff0000 100%);border-left:1px solid #a8a8a8;"><span style="top:20px;left:0px;right:0px">ΧΗΜ</span></div>
<div class="cell" style="left:902px;top:255px;width:53px;height:55px;background:linear-gradient(#fffff4 0%,#ffffcc 34%,#ffffcc 100%);border-left:1px solid #a8a8a8;"><span style="top:20px;left:0px;right:0px">ΝΕΑ</span></div>
<div class="cell" style="left:955px;top:255px;width:54px;height:55px;background:linear-gradient(#fffff4 0%,#ffffcc 34%,#ffffcc 100%);border-left:1px solid #a8a8a8;"></div>
<div class="cell" style="left:1009px;top:255px;width:53px;height:55px;background:linear-gradient(#ff7474 0%,#ff0000 34%,#ff0000 100%);border-left:1px solid #a8a8a8;"></div>
<div class="cell" style="left:1062px;top:255px;width:54px;height:55px;background:linear-gradient(#90ffff 0%,#00ffff 34%,#00ffff 100%);border-left:1px solid #a8a8a8;"></div>
<div class="cell" style="left:1116px;top:255px;width:53px;height:55px;background:linear-gradient(#fff2dc 0%,#ffc966 34%,#ffc966 100%);border-left:1px solid #a8a8a8;"></div>
<div class="cell" style="left:1169px;top:255px;width:54px;height:55px;background:linear-gradient(#fff0ff 0%,#ffccff 34%,#ffccff 100%);border-left:1px solid #a8a8a8;"></div>
<div class="cell" style="left:1223px;top:255px;width:53px;height:55px;background:linear-gradient(#fff0ff 0%,#ffccff 34%,#ffccff 100%);border-left:1px solid #a8a8a8;"></div>
<div class="cell" style="left:1276px;top:255px;width:53px;height:55px;background:linear-gradient(#c4ffc4 0%,#66ff66 34%,#66ff66 100%);border-left:1px solid #a8a8a8;"></div>
<div class="cell" style="left:1329px;top:255px;width:54px;height:55px;background:linear-gradient(#c4ffc4 0%,#66ff66 34%,#66ff66 100%);border-left:1px solid #a8a8a8;border-left:none;"></div>
<div class="cell" style="left:1383px;top:255px;width:53px;height:55px;background:linear-gradient(#fff2dc 0%,#ffc966 34%,#ffc966 100%);border-left:1px solid #a8a8a8;"></div>
<div class="cell" style="left:902px;top:311px;width:53px;height:55px;background:linear-gradient(#fff0ff 0%,#ffccff 34%,#ffccff 100%);border-left:1px solid #a8a8a8;"><span style="top:20px;left:0px;right:0px">ΑΛΓΕ</span></div>
<div class="cell" style="left:902px;top:367px;width:54px;height:55px;background:linear-gradient(#70e070 0%,#00c000 34%,#00c000 100%);border-left:1px solid #a8a8a8;"><span style="left:22.5px;right:auto;top:20px">ει</span></div>
<div class="cell" style="left:902px;top:423px;width:53px;height:55px;background:linear-gradient(#ff7474 0%,#ff0000 34%,#ff0000 100%);border-left:1px solid #a8a8a8;"><span style="top:20px;left:0px;right:0px">ΦΥΣΚ</span></div>
<div class="cell" style="left:902px;top:479px;width:54px;height:55px;background:linear-gradient(#d4ffb4 0%,#8af44c 34%,#8af44c 100%);border-left:1px solid #a8a8a8;"><span style="left:17.5px;right:auto;top:14px">οο</span></div>
<div class="cell" style="left:902px;top:535px;width:53px;height:55px;background:linear-gradient(#ff7474 0%,#ff0000 34%,#ff0000 100%);border-left:1px solid #a8a8a8;"><span style="top:20px;left:0px;right:0px">ΦΥΣΚ</span></div>
<div class="cell" style="left:902px;top:591px;width:53px;height:55px;background:linear-gradient(#ff8a60 0%,#ff3300 34%,#ff3300 100%);border-left:1px solid #a8a8a8;"></div>
<div class="cell" style="left:902px;top:647px;width:54px;height:55px;background:linear-gradient(#ff80ff 0%,#ff00ff 34%,#ff00ff 100%);border-left:1px solid #a8a8a8;"><span style="left:20.8px;right:auto;top:12px">Ετ</span></div>
<div class="cell" style="left:902px;top:703px;width:53px;height:55px;background:linear-gradient(#d0ffff 0%,#66ffff 34%,#66ffff 100%);border-left:1px solid #a8a8a8;"><span style="top:20px;left:0px;right:0px">ΝΕΑ</span></div>
<div class="cell" style="left:902px;top:759px;width:54px;height:55px;background:linear-gradient(#d4d4fa 0%,#9999ee 34%,#9999ee 100%);border-left:1px solid #a8a8a8;"><span style="left:15.2px;right:auto;top:11.6px">ΡΓ</span><span style="left:16.6px;right:auto;top:27.799999999999997px">ΠΛ</span></div>
<div class="cell" style="left:1383px;top:311px;width:53px;height:55px;background:linear-gradient(#fffff4 0%,#ffffcc 34%,#ffffcc 100%);border-left:1px solid #a8a8a8;"></div>
<div class="cell" style="left:1383px;top:367px;width:60px;height:55px;background:linear-gradient(#70e070 0%,#00c000 34%,#00c000 100%);border-left:1px solid #a8a8a8;"><span style="left:42.4px;right:auto;top:20px">λε</span></div>
<div class="cell" style="left:1383px;top:423px;width:53px;height:55px;background:linear-gradient(#8a8aff 0%,#3333ff 34%,#3333ff 100%);border-left:1px solid #a8a8a8;"><span style="left:37.6px;right:auto;top:29.5px">π.</span></div>
<div class="cell" style="left:1383px;top:479px;width:53px;height:55px;background:linear-gradient(#c88888 0%,#993333 34%,#993333 100%);border-left:1px solid #a8a8a8;"></div>
<div class="cell" style="left:1383px;top:535px;width:60px;height:55px;background:linear-gradient(#70d0a0 0%,#009944 34%,#009944 100%);border-left:1px solid #a8a8a8;"></div>
<div class="cell" style="left:1383px;top:591px;width:60px;height:55px;background:linear-gradient(#ff8a60 0%,#ff3300 34%,#ff3300 100%);border-left:1px solid #a8a8a8;"><span style="left:41.3px;right:auto;top:20px">Ερ</span></div>
<div class="cell" style="left:1383px;top:647px;width:60px;height:55px;background:linear-gradient(#ff80ff 0%,#ff00ff 34%,#ff00ff 100%);border-left:1px solid #a8a8a8;"><span style="left:35.6px;right:auto;top:21px">Κ-ΙΙ</span></div>
<div class="cell" style="left:1383px;top:703px;width:53px;height:55px;background:linear-gradient(#d0ffff 0%,#66ffff 34%,#66ffff 100%);border-left:1px solid #a8a8a8;"></div>
<div class="cell" style="left:1383px;top:759px;width:60px;height:55px;background:linear-gradient(#9cc050 0%,#669900 34%,#669900 100%);border-left:1px solid #a8a8a8;"><span style="left:39.4px;right:auto;top:20px">Δ&amp;</span></div>
<div class="abs" style="left:1437px;top:199px;width:1px;height:55px;background:#66ff66"></div>
<div class="vl" style="left:1436px;top:199px;height:55px;background:#8d8d8d"></div>
<div class="abs" style="left:1437px;top:255px;width:1px;height:55px;background:#d8ff90"></div>
<div class="vl" style="left:1436px;top:255px;height:55px;background:#8d8d8d"></div>
<div class="abs" style="left:1437px;top:311px;width:1px;height:55px;background:#808080"></div>
<div class="vl" style="left:1436px;top:311px;height:55px;background:#8d8d8d"></div>
<div class="abs" style="left:1437px;top:423px;width:1px;height:55px;background:#66ffff"></div>
<div class="vl" style="left:1436px;top:423px;height:55px;background:#8d8d8d"></div>
<div class="abs" style="left:1437px;top:479px;width:1px;height:55px;background:#9999ee"></div>
<div class="vl" style="left:1436px;top:479px;height:55px;background:#8d8d8d"></div>
<div class="abs" style="left:1437px;top:703px;width:1px;height:55px;background:#66ffff"></div>
<div class="vl" style="left:1436px;top:703px;height:55px;background:#8d8d8d"></div>
<div class="abs" style="left:1437px;top:815px;width:1px;height:55px;background:#3333ff"></div>
<div class="vl" style="left:1436px;top:815px;height:55px;background:#8d8d8d"></div>
<svg class="abs" style="left:1384px;top:535px" width="60" height="55"><path d="M0 46L60 36V55H0Z" fill="#6666ee"/></svg>
<div class="cell" style="left:47px;top:815px;width:106px;height:55px;background:linear-gradient(#fffff4 0%,#ffffcc 34%,#ffffcc 100%);border-left:1px solid #a8a8a8;"><span style="top:19.5px;left:0px;right:0px">ΝΕΑ (Π)</span></div>
<div class="cell" style="left:153px;top:815px;width:54px;height:55px;background:linear-gradient(#8a8aff 0%,#3333ff 34%,#3333ff 100%);border-left:1px solid #a8a8a8;"><span style="top:19.5px;left:-3px;right:3px">Κεντρ</span></div>
<div class="cell" style="left:207px;top:815px;width:53px;height:55px;background:linear-gradient(#6060ff 0%,#0000ff 34%,#0000ff 100%);border-left:1px solid #a8a8a8;"><span style="top:19.5px;left:0px;right:0px">ΜΑΘΜ</span></div>
<div class="cell" style="left:260px;top:815px;width:161px;height:55px;background:linear-gradient(#ffffa8 0%,#ffff00 34%,#ffff00 100%);border-left:1px solid #a8a8a8;"><span style="top:19.5px;left:0px;right:0px">Ε-Κ.Δ.Κ.Θ</span></div>
<div class="cell" style="left:421px;top:815px;width:53px;height:55px;background:linear-gradient(#ffffa8 0%,#ffff00 34%,#ffff00 100%);border-left:1px solid #a8a8a8;"><span style="top:11.7px;left:0px;right:0px">Κ.Λ.Κ.</span></div>
<div class="cell" style="left:474px;top:815px;width:54px;height:55px;background:linear-gradient(#b0b050 0%,#808000 34%,#808000 100%);border-left:1px solid #a8a8a8;"><span style="top:19.5px;left:0px;right:0px">ΦΥΣΚ</span></div>
<div class="cell" style="left:528px;top:815px;width:53px;height:55px;background:linear-gradient(#60d090 0%,#009a38 34%,#009a38 100%);border-left:1px solid #a8a8a8;"><span style="top:11.7px;left:0px;right:0px">Σι. Επ.</span></div>
<div class="cell" style="left:581px;top:815px;width:54px;height:55px;background:linear-gradient(#8a8aff 0%,#3333ff 34%,#3333ff 100%);border-left:1px solid #a8a8a8;"><span style="top:19.5px;left:-3px;right:3px">Κεντρ</span></div>
<div class="cell" style="left:635px;top:815px;width:53px;height:55px;background:linear-gradient(#6060ff 0%,#0000ff 34%,#0000ff 100%);border-left:1px solid #a8a8a8;"><span style="top:19.5px;left:0px;right:0px">ΜΑΘΜ</span></div>
<div class="cell" style="left:688px;top:815px;width:53px;height:55px;background:linear-gradient(#ffffd0 0%,#ffff66 34%,#ffff66 100%);border-left:1px solid #a8a8a8;"><span style="top:11.7px;left:0px;right:0px">Ζ.Ε.Κ.</span></div>
<div class="cell" style="left:741px;top:815px;width:54px;height:55px;background:linear-gradient(#d1d1d6 0%,#d1d1d6 34%,#d1d1d6 100%);border-left:1px solid #a8a8a8;border-left:1px solid #d1d1d6;"></div>
<div class="cell" style="left:795px;top:815px;width:214px;height:55px;background:linear-gradient(#ffffd0 0%,#ffff66 34%,#ffff66 100%);border-left:1px solid #a8a8a8;"><span style="top:19.5px;left:0px;right:0px">Ε-Σ.Ε.Κ.Θ</span></div>
<div class="cell" style="left:1009px;top:815px;width:160px;height:55px;background:linear-gradient(#ffffa8 0%,#ffff00 34%,#ffff00 100%);border-left:1px solid #a8a8a8;"><span style="top:19.5px;left:0px;right:0px">Ε-Κ.Δ.Κ.Θ</span></div>
<div class="cell" style="left:1169px;top:815px;width:160px;height:55px;background:linear-gradient(#ffffd0 0%,#ffff66 34%,#ffff66 100%);border-left:1px solid #a8a8a8;"><span style="top:19.5px;left:0px;right:0px">Ε-Σ.Ε.Κ.Θ</span></div>
<div class="cell" style="left:1329px;top:815px;width:54px;height:55px;background:linear-gradient(#60d090 0%,#009a38 34%,#009a38 100%);border-left:1px solid #a8a8a8;"><span style="top:11.7px;left:0px;right:0px">Στοιχ.</span></div>
<div class="cell" style="left:1383px;top:815px;width:53px;height:55px;background:linear-gradient(#ffffa8 0%,#ffff00 34%,#ffff00 100%);border-left:1px solid #a8a8a8;"><span style="top:11.7px;left:0px;right:0px">Κ.Λ.Κ.</span></div>
<div class="abs" style="left:190.2px;top:834.6px;width:2px;height:1.3px;background:#15153a"></div>
<div class="abs" style="left:195.8px;top:834.6px;width:2px;height:1.3px;background:#15153a"></div>
<div class="abs" style="left:617.8px;top:834.6px;width:2px;height:1.3px;background:#15153a"></div>
<div class="abs" style="left:623.4px;top:834.6px;width:2px;height:1.3px;background:#15153a"></div>
<div class="cell" style="left:19px;top:815px;width:28px;height:55px;"><span style="top:19.5px;left:-1px;">ΓΥ</span></div>
<div class="vl" style="left:421px;top:165px;height:681px;background:#000"></div>
<div class="vl" style="left:795px;top:165px;height:681px;background:#000"></div>
<div class="vl" style="left:1169px;top:165px;height:681px;background:#000"></div><div class="dlg" style="left:51px;top:203px;width:838px;height:632px;background:#ececec;border:1px solid #f6f6f6"></div>
<div class="dlgin" style="left:58px;top:233px;width:825px;height:595px;border-color:#dedede"></div>
<div class="dtitle" style="left:438px;top:210px;letter-spacing:0.25px">Ρυθμίσεις</div>
<div class="xbtn" style="left:850px;top:204px;width:33px;height:17.5px;background:#bcbcbc"><svg width="33" height="17.5" style="position:absolute;left:0;top:0"><path d="M12.9 5.8500000000000005L20.1 12.25M20.1 5.8500000000000005L12.9 12.25" stroke="#fff" stroke-width="2.2" fill="none"/></svg></div>
<div class="wbtn" style="left:721px;top:795px;width:73px;height:24.5px"></div>
<div class="wbtn" style="left:802px;top:795px;width:73px;height:24.5px"></div>
<div class="dlg" style="left:17px;top:221.5px;width:908px;height:596px;background:#ececec;border:1px solid rgba(200,205,210,0.55);"></div>
<div class="dlgin" style="left:23px;top:252px;width:895px;height:558.5px"></div>
<div class="dtitle" style="left:438.5px;top:227.6px;letter-spacing:-0.369px;">Περίοδοι</div>
<div class="xbtn" style="left:885px;top:223px;width:33px;height:19.5px;background:#bcbcbc"><svg width="33" height="19.5" style="position:absolute;left:0;top:0"><path d="M12.9 6.8500000000000005L20.1 13.25M20.1 6.8500000000000005L12.9 13.25" stroke="#fff" stroke-width="2.2" fill="none"/></svg></div>
<div class="abs" style="left:35px;top:263px;width:657px;height:325px;background:#fff;border:1px solid #8e8e8e;border-right-color:#f4f4f4;border-bottom-color:#f4f4f4;box-sizing:border-box"></div>
<div class="abs" style="left:36px;top:264px;width:655px;height:23px;background:#f4f4f4;border-bottom:1px solid #5a5a5a"></div>
<div class="abs" style="left:55px;top:266px;width:1px;height:19px;background:#5c5c7a"></div>
<div class="abs" style="left:245px;top:266px;width:1px;height:19px;background:#5c5c7a"></div>
<div class="abs" style="left:325px;top:266px;width:1px;height:19px;background:#5c5c7a"></div>
<div class="abs" style="left:405px;top:266px;width:1px;height:19px;background:#5c5c7a"></div>
<div class="abs" style="left:485px;top:266px;width:1px;height:19px;background:#5c5c7a"></div>
<div class="abs" style="left:525px;top:266px;width:1px;height:19px;background:#5c5c7a"></div>
<div class="abs" style="left:595px;top:266px;width:1px;height:19px;background:#5c5c7a"></div>
<div class="abs" style="left:675px;top:266px;width:1px;height:19px;background:#5c5c7a"></div>
<div class="lt" style="left:59.6px;top:265.5px;letter-spacing:0.134px;">Όνομα</div>
<div class="lt" style="left:249.2px;top:265.5px;letter-spacing:-0.02px;">Συντομογρ...</div>
<div class="lt" style="left:328.6px;top:265.5px;letter-spacing:-0.372px;">Έναρξη</div>
<div class="lt" style="left:408.8px;top:265.5px;letter-spacing:0.432px;">Τέλος</div>
<div class="lt" style="left:489.3px;top:265.5px;letter-spacing:-0.165px;">Διάρ...</div>
<div class="lt" style="left:530px;top:265.5px;letter-spacing:-0.059px;">Εκτύπωση</div>
<div class="lt" style="left:599.2px;top:265.5px;letter-spacing:0.177px;">Κουδούνι</div>
<div class="abs" style="left:36px;top:288px;width:640px;height:19px;background:#fff;border-bottom:1px solid #e9e9e9"></div>
<svg class="abs" style="left:37.7px;top:289.5px" width="17" height="17" viewBox="0 0 17 17"><defs><linearGradient id="ck0" x1="0" y1="0" x2="0" y2="1"><stop offset="0" stop-color="#86a8f4"/><stop offset="1" stop-color="#2a52d4"/></linearGradient></defs><circle cx="8.5" cy="8.5" r="6.9" fill="#eef1f8" stroke="url(#ck0)" stroke-width="2"/><circle cx="8.5" cy="8.5" r="5.6" fill="none" stroke="#c4cde6" stroke-width="0.7"/><path d="M8.4 8.6L12.2 7.6" stroke="#444" stroke-width="1" fill="none"/><path d="M8.6 8.6L5.2 6" stroke="#666" stroke-width="0.9" fill="none"/><path d="M8.9 8.2L6.2 13" stroke="#e84040" stroke-width="0.9" fill="none"/></svg>
<div class="lt" style="left:60.8px;top:287.7px;letter-spacing:-0.838px;">1</div>
<div class="lt" style="left:250px;top:287.7px;letter-spacing:-0.838px;">1</div>
<div class="lt" style="left:330.5px;top:287.7px;letter-spacing:-0.802px;">8:00</div>
<div class="lt" style="left:410.4px;top:287.7px;letter-spacing:-0.802px;">8:45</div>
<div class="lt" style="left:490.1px;top:287.7px;letter-spacing:-0.83px;">45</div>
<div class="lt" style="left:530px;top:287.7px;letter-spacing:0.473px;">Ναι</div>
<div class="lt" style="left:601px;top:287.7px;letter-spacing:0.095px;">Όλα τα τμή...</div>
<div class="abs" style="left:36px;top:308px;width:640px;height:19px;background:#f5f5f5;border-bottom:1px solid #e9e9e9"></div>
<svg class="abs" style="left:37.7px;top:309.5px" width="17" height="17" viewBox="0 0 17 17"><defs><linearGradient id="ck1" x1="0" y1="0" x2="0" y2="1"><stop offset="0" stop-color="#86a8f4"/><stop offset="1" stop-color="#2a52d4"/></linearGradient></defs><circle cx="8.5" cy="8.5" r="6.9" fill="#eef1f8" stroke="url(#ck1)" stroke-width="2"/><circle cx="8.5" cy="8.5" r="5.6" fill="none" stroke="#c4cde6" stroke-width="0.7"/><path d="M8.4 8.6L12.2 7.6" stroke="#444" stroke-width="1" fill="none"/><path d="M8.6 8.6L5.2 6" stroke="#666" stroke-width="0.9" fill="none"/><path d="M8.9 8.2L6.2 13" stroke="#e84040" stroke-width="0.9" fill="none"/></svg>
<div class="lt" style="left:60.8px;top:307.7px;letter-spacing:-0.838px;">2</div>
<div class="lt" style="left:250px;top:307.7px;letter-spacing:-0.838px;">2</div>
<div class="lt" style="left:330.5px;top:307.7px;letter-spacing:-0.802px;">9:00</div>
<div class="lt" style="left:410.4px;top:307.7px;letter-spacing:-0.802px;">9:45</div>
<div class="lt" style="left:490.1px;top:307.7px;letter-spacing:-0.83px;">45</div>
<div class="lt" style="left:530px;top:307.7px;letter-spacing:0.473px;">Ναι</div>
<div class="lt" style="left:601px;top:307.7px;letter-spacing:0.095px;">Όλα τα τμή...</div>
<div class="abs" style="left:36px;top:328px;width:640px;height:19px;background:#fff;border-bottom:1px solid #e9e9e9"></div>
<svg class="abs" style="left:37.7px;top:329.5px" width="17" height="17" viewBox="0 0 17 17"><defs><linearGradient id="ck2" x1="0" y1="0" x2="0" y2="1"><stop offset="0" stop-color="#86a8f4"/><stop offset="1" stop-color="#2a52d4"/></linearGradient></defs><circle cx="8.5" cy="8.5" r="6.9" fill="#eef1f8" stroke="url(#ck2)" stroke-width="2"/><circle cx="8.5" cy="8.5" r="5.6" fill="none" stroke="#c4cde6" stroke-width="0.7"/><path d="M8.4 8.6L12.2 7.6" stroke="#444" stroke-width="1" fill="none"/><path d="M8.6 8.6L5.2 6" stroke="#666" stroke-width="0.9" fill="none"/><path d="M8.9 8.2L6.2 13" stroke="#e84040" stroke-width="0.9" fill="none"/></svg>
<div class="lt" style="left:60.8px;top:327.7px;letter-spacing:-0.838px;">3</div>
<div class="lt" style="left:250px;top:327.7px;letter-spacing:-0.838px;">3</div>
<div class="lt" style="left:330.5px;top:327.7px;letter-spacing:-0.806px;">10:00</div>
<div class="lt" style="left:410.4px;top:327.7px;letter-spacing:-0.806px;">10:45</div>
<div class="lt" style="left:490.1px;top:327.7px;letter-spacing:-0.83px;">45</div>
<div class="lt" style="left:530px;top:327.7px;letter-spacing:0.473px;">Ναι</div>
<div class="lt" style="left:601px;top:327.7px;letter-spacing:0.095px;">Όλα τα τμή...</div>
<div class="abs" style="left:36px;top:348px;width:640px;height:19px;background:#f5f5f5;border-bottom:1px solid #e9e9e9"></div>
<svg class="abs" style="left:37.7px;top:349.4px" width="17" height="17" viewBox="0 0 17 17"><defs><radialGradient id="gb3" cx="0.5" cy="0.72" r="0.62"><stop offset="0" stop-color="#c8ff90"/><stop offset="0.55" stop-color="#72e04a"/><stop offset="1" stop-color="#2fae24"/></radialGradient></defs><circle cx="8.5" cy="8.5" r="7.2" fill="url(#gb3)" stroke="#2e6a2a" stroke-width="1.2"/><ellipse cx="8.5" cy="5.4" rx="5" ry="3" fill="#fff" opacity="0.7"/></svg>
<div class="lt" style="left:60.5px;top:347.7px;letter-spacing:-0.107px;">Γεύμα Α-Β</div>
<div class="lt" style="left:249.6px;top:347.7px;letter-spacing:-0.018px;">Γεύμα Α-Β</div>
<div class="lt" style="left:330.5px;top:347.7px;letter-spacing:-0.806px;">10:45</div>
<div class="lt" style="left:410.4px;top:347.7px;letter-spacing:-0.628px;">11:00</div>
<div class="lt" style="left:490.1px;top:347.7px;letter-spacing:-0.83px;">15</div>
<div class="lt" style="left:530px;top:347.7px;letter-spacing:0.473px;">Ναι</div>
<div class="lt" style="left:601px;top:347.7px;letter-spacing:0.095px;">Όλα τα τμή...</div>
<div class="abs" style="left:36px;top:368px;width:640px;height:19px;background:#fff;border-bottom:1px solid #e9e9e9"></div>
<svg class="abs" style="left:37.7px;top:369.5px" width="17" height="17" viewBox="0 0 17 17"><defs><linearGradient id="ck4" x1="0" y1="0" x2="0" y2="1"><stop offset="0" stop-color="#86a8f4"/><stop offset="1" stop-color="#2a52d4"/></linearGradient></defs><circle cx="8.5" cy="8.5" r="6.9" fill="#eef1f8" stroke="url(#ck4)" stroke-width="2"/><circle cx="8.5" cy="8.5" r="5.6" fill="none" stroke="#c4cde6" stroke-width="0.7"/><path d="M8.4 8.6L12.2 7.6" stroke="#444" stroke-width="1" fill="none"/><path d="M8.6 8.6L5.2 6" stroke="#666" stroke-width="0.9" fill="none"/><path d="M8.9 8.2L6.2 13" stroke="#e84040" stroke-width="0.9" fill="none"/></svg>
<div class="lt" style="left:60.8px;top:367.7px;letter-spacing:-0.838px;">4</div>
<div class="lt" style="left:250px;top:367.7px;letter-spacing:-0.838px;">4</div>
<div class="lt" style="left:330.5px;top:367.7px;letter-spacing:-0.628px;">11:00</div>
<div class="lt" style="left:410.4px;top:367.7px;letter-spacing:-0.628px;">11:45</div>
<div class="lt" style="left:490.1px;top:367.7px;letter-spacing:-0.83px;">45</div>
<div class="lt" style="left:530px;top:367.7px;letter-spacing:0.473px;">Ναι</div>
<div class="lt" style="left:601px;top:367.7px;letter-spacing:0.095px;">Όλα τα τμή...</div>
<div class="abs" style="left:36px;top:388px;width:640px;height:19px;background:#f5f5f5;border-bottom:1px solid #e9e9e9"></div>
<svg class="abs" style="left:37.7px;top:389.5px" width="17" height="17" viewBox="0 0 17 17"><defs><linearGradient id="ck5" x1="0" y1="0" x2="0" y2="1"><stop offset="0" stop-color="#86a8f4"/><stop offset="1" stop-color="#2a52d4"/></linearGradient></defs><circle cx="8.5" cy="8.5" r="6.9" fill="#eef1f8" stroke="url(#ck5)" stroke-width="2"/><circle cx="8.5" cy="8.5" r="5.6" fill="none" stroke="#c4cde6" stroke-width="0.7"/><path d="M8.4 8.6L12.2 7.6" stroke="#444" stroke-width="1" fill="none"/><path d="M8.6 8.6L5.2 6" stroke="#666" stroke-width="0.9" fill="none"/><path d="M8.9 8.2L6.2 13" stroke="#e84040" stroke-width="0.9" fill="none"/></svg>
<div class="lt" style="left:60.8px;top:387.7px;letter-spacing:-0.838px;">5</div>
<div class="lt" style="left:250px;top:387.7px;letter-spacing:-0.838px;">5</div>
<div class="lt" style="left:330.5px;top:387.7px;letter-spacing:-0.806px;">12:00</div>
<div class="lt" style="left:410.4px;top:387.7px;letter-spacing:-0.806px;">12:45</div>
<div class="lt" style="left:490.1px;top:387.7px;letter-spacing:-0.83px;">45</div>
<div class="lt" style="left:530px;top:387.7px;letter-spacing:0.473px;">Ναι</div>
<div class="lt" style="left:601px;top:387.7px;letter-spacing:0.095px;">Όλα τα τμή...</div>
<div class="abs" style="left:36px;top:408px;width:640px;height:19px;background:#c8fac8;border-bottom:1px solid #e9e9e9"></div>
<svg class="abs" style="left:37.7px;top:409.4px" width="17" height="17" viewBox="0 0 17 17"><defs><radialGradient id="gb6" cx="0.5" cy="0.72" r="0.62"><stop offset="0" stop-color="#c8ff90"/><stop offset="0.55" stop-color="#72e04a"/><stop offset="1" stop-color="#2fae24"/></radialGradient></defs><circle cx="8.5" cy="8.5" r="7.2" fill="url(#gb6)" stroke="#2e6a2a" stroke-width="1.2"/><ellipse cx="8.5" cy="5.4" rx="5" ry="3" fill="#fff" opacity="0.7"/></svg>
<div class="lt" style="left:60.5px;top:407.7px;letter-spacing:0.01px;">Γεύμα Γ</div>
<div class="lt" style="left:249.6px;top:407.7px;letter-spacing:0.01px;">Γεύμα Γ</div>
<div class="lt" style="left:330.5px;top:407.7px;letter-spacing:-0.806px;">12:45</div>
<div class="lt" style="left:410.4px;top:407.7px;letter-spacing:-0.806px;">13:00</div>
<div class="lt" style="left:490.1px;top:407.7px;letter-spacing:-0.83px;">15</div>
<div class="lt" style="left:530px;top:407.7px;letter-spacing:0.473px;">Ναι</div>
<div class="lt" style="left:601px;top:407.7px;letter-spacing:0.095px;">Όλα τα τμή...</div>
<div class="abs" style="left:36px;top:428px;width:640px;height:19px;background:#f5f5f5;border-bottom:1px solid #e9e9e9"></div>
<svg class="abs" style="left:37.7px;top:429.5px" width="17" height="17" viewBox="0 0 17 17"><defs><linearGradient id="ck7" x1="0" y1="0" x2="0" y2="1"><stop offset="0" stop-color="#86a8f4"/><stop offset="1" stop-color="#2a52d4"/></linearGradient></defs><circle cx="8.5" cy="8.5" r="6.9" fill="#eef1f8" stroke="url(#ck7)" stroke-width="2"/><circle cx="8.5" cy="8.5" r="5.6" fill="none" stroke="#c4cde6" stroke-width="0.7"/><path d="M8.4 8.6L12.2 7.6" stroke="#444" stroke-width="1" fill="none"/><path d="M8.6 8.6L5.2 6" stroke="#666" stroke-width="0.9" fill="none"/><path d="M8.9 8.2L6.2 13" stroke="#e84040" stroke-width="0.9" fill="none"/></svg>
<div class="lt" style="left:60.8px;top:427.7px;letter-spacing:-0.838px;">6</div>
<div class="lt" style="left:250px;top:427.7px;letter-spacing:-0.838px;">6</div>
<div class="lt" style="left:330.5px;top:427.7px;letter-spacing:-0.806px;">13:00</div>
<div class="lt" style="left:410.4px;top:427.7px;letter-spacing:-0.806px;">13:45</div>
<div class="lt" style="left:490.1px;top:427.7px;letter-spacing:-0.83px;">45</div>
<div class="lt" style="left:530px;top:427.7px;letter-spacing:0.473px;">Ναι</div>
<div class="lt" style="left:601px;top:427.7px;letter-spacing:0.095px;">Όλα τα τμή...</div>
<div class="abs" style="left:36px;top:448px;width:640px;height:19px;background:#fff;border-bottom:1px solid #e9e9e9"></div>
<svg class="abs" style="left:37.7px;top:449.5px" width="17" height="17" viewBox="0 0 17 17"><defs><linearGradient id="ck8" x1="0" y1="0" x2="0" y2="1"><stop offset="0" stop-color="#86a8f4"/><stop offset="1" stop-color="#2a52d4"/></linearGradient></defs><circle cx="8.5" cy="8.5" r="6.9" fill="#eef1f8" stroke="url(#ck8)" stroke-width="2"/><circle cx="8.5" cy="8.5" r="5.6" fill="none" stroke="#c4cde6" stroke-width="0.7"/><path d="M8.4 8.6L12.2 7.6" stroke="#444" stroke-width="1" fill="none"/><path d="M8.6 8.6L5.2 6" stroke="#666" stroke-width="0.9" fill="none"/><path d="M8.9 8.2L6.2 13" stroke="#e84040" stroke-width="0.9" fill="none"/></svg>
<div class="lt" style="left:60.8px;top:447.7px;letter-spacing:-0.838px;">7</div>
<div class="lt" style="left:250px;top:447.7px;letter-spacing:-0.838px;">7</div>
<div class="lt" style="left:330.5px;top:447.7px;letter-spacing:-0.806px;">14:00</div>
<div class="lt" style="left:410.4px;top:447.7px;letter-spacing:-0.806px;">14:45</div>
<div class="lt" style="left:490.1px;top:447.7px;letter-spacing:-0.83px;">45</div>
<div class="lt" style="left:530px;top:447.7px;letter-spacing:0.473px;">Ναι</div>
<div class="lt" style="left:601px;top:447.7px;letter-spacing:0.095px;">Όλα τα τμή...</div>
<div class="abs" style="left:33px;top:345px;width:646.4px;height:86px;border:3px solid #e8413c;box-sizing:border-box;border-radius:1px"></div>
<div class="wbtn" style="left:721px;top:269px;width:184px;height:25.5px;"><span style="top:6.3px;letter-spacing:-0.425px">Επεξεργασία</span></div>
<div class="wbtn" style="left:721px;top:311px;width:184px;height:25.5px;"><span style="top:6.3px;letter-spacing:-0.141px">Διαγραφή</span></div>
<div class="wbtn" style="left:721px;top:534px;width:184px;height:54.5px;"><span style="top:13.2px;letter-spacing:-0.196px">Προσθέστε διάλειμμα το οποίο θα</span><span style="top:26.2px;letter-spacing:-0.127px">τυπωθεί μεταξύ διδασκαλιών</span></div>
<div class="wbtn" style="left:792px;top:772px;width:113.5px;height:25.5px;"><span style="top:5.8px;letter-spacing:-0.653px">OK</span></div>
<svg class="abs" style="left:700.5px;top:544px" width="9" height="11" viewBox="0 0 9 11"><path d="M4.5 10.5V1.6M1 5L4.5 1.5L8 5" fill="none" stroke="#111" stroke-width="1.7"/></svg>
<svg class="abs" style="left:700.5px;top:570px" width="9" height="11" viewBox="0 0 9 11"><path d="M4.5 0.5V9.4M1 6L4.5 9.5L8 6" fill="none" stroke="#111" stroke-width="1.7"/></svg>
<div class="gb" style="left:35px;top:617.5px;width:459px;height:81px"></div>
<div class="abs" style="left:41px;top:612px;width:372px;height:12px;background:#f0f0f0"></div>
<div class="cb" style="left:45px;top:612px"><svg width="11" height="11" style="position:absolute;left:0;top:0" viewBox="0 0 11 11"><path d="M1.7 5.3L4.3 8.2L9.3 2.1" fill="none" stroke="#000" stroke-width="2"/></svg></div>
<div class="tx" style="left:61px;top:611.6px;letter-spacing:-0.084px;">Διαφορετικές ώρες διδασκαλίας για διαφορετικά τμημάτα</div>
<div class="sel" style="left:57px;top:637px;width:165px;height:20.5px;"></div><svg class="abs" style="left:209px;top:643.9px" width="10" height="8" viewBox="0 0 10 8"><path d="M1.7 1.9L4.7 5.1L7.7 1.9" fill="none" stroke="#4a4a4a" stroke-width="1.8"/></svg>
<div class="tx" style="left:61px;top:641px;letter-spacing:-0.189px;">Κουδούνια 2</div>
<div class="wbtn" style="left:234px;top:636.3px;width:109px;height:21.200000000000045px;"><span style="top:3.1px;letter-spacing:-0.034px">Ισχύει για</span></div>
<div class="tx" style="left:59px;top:667px;letter-spacing:-0.267px;">Α1,Α2,Α3,ΒΛ,ΒΜ,ΒΠ,ΒΥ</div>
<div class="gb" style="left:35px;top:709px;width:459px;height:81px"></div>
<div class="abs" style="left:41px;top:704px;width:402px;height:12px;background:#f0f0f0"></div>
<div class="cb" style="left:44.5px;top:704px"></div>
<div class="tx" style="left:61px;top:704px;letter-spacing:-0.092px;">Άλλη Έναρξη σε ημέρες</div><div class="dlg" style="left:934px;top:271px;width:490px;height:562.6px;background:#fafafa;border:1px solid rgba(165,170,175,0.6);"></div>
<div class="dlgin" style="left:941px;top:302px;width:476px;height:525px;border-color:#d9d9d9"></div>
<div class="dtitle" style="left:1146px;top:277px;letter-spacing:-0.547px;color:#333;">Περίοδος</div>
<div class="xbtn" style="left:1384px;top:272px;width:33px;height:21px;background:#c75050"><svg width="33" height="21" style="position:absolute;left:0;top:0"><path d="M12.9 7.6000000000000005L20.1 14.0M20.1 7.6000000000000005L12.9 14.0" stroke="#fff" stroke-width="2.2" fill="none"/></svg></div>
<div class="tx" style="left:964.7px;top:329px;letter-spacing:-0.168px;">Ονομασία διαλείμματος:</div>
<div class="inp" style="left:1139px;top:326px;width:183px;height:20px"></div>
<div class="tx" style="left:1145px;top:329px;letter-spacing:-0.108px;">Γεύμα Α-Β</div>
<div class="tx" style="left:964.7px;top:357px;letter-spacing:-0.026px;">Συντομογραφία</div>
<div class="inp" style="left:1139px;top:352px;width:183px;height:20px"></div>
<div class="tx" style="left:1145px;top:355px;letter-spacing:-0.108px;">Γεύμα Α-Β</div>
<div class="tx" style="left:967.8px;top:389px;letter-spacing:-0.15px;">Θέση διαλείμματος:</div>
<div class="sel" style="left:1139px;top:388px;width:214.70000000000005px;height:21px;"></div><svg class="abs" style="left:1340.7px;top:394.9px" width="10" height="8" viewBox="0 0 10 8"><path d="M1.7 1.9L4.7 5.1L7.7 1.9" fill="none" stroke="#4a4a4a" stroke-width="1.8"/></svg>
<div class="tx" style="left:1143px;top:392px;letter-spacing:-0.176px;">Το διάλειμμα είναι πριν τιν περίοδο νουμ</div>
<div class="abs" style="left:1332.5px;top:401px;width:1px;height:1px;background:#555"></div>
<div class="gb" style="left:953px;top:426px;width:453px;height:94.3px"></div>
<div class="abs" style="left:959px;top:421px;width:80px;height:12px;background:#f0f0f0"></div>
<div class="tx" style="left:962.5px;top:420px;letter-spacing:0.04px;">Έναρξη / Τέλος</div>
<div class="sel" style="left:977px;top:448px;width:81px;height:21px;background:#fff;"></div><svg class="abs" style="left:1045px;top:454.9px" width="10" height="8" viewBox="0 0 10 8"><path d="M1.7 1.9L4.7 5.1L7.7 1.9" fill="none" stroke="#4a4a4a" stroke-width="1.8"/></svg>
<div class="sel" style="left:1064px;top:448px;width:81px;height:21px;background:#fff;"></div><svg class="abs" style="left:1132px;top:454.9px" width="10" height="8" viewBox="0 0 10 8"><path d="M1.7 1.9L4.7 5.1L7.7 1.9" fill="none" stroke="#4a4a4a" stroke-width="1.8"/></svg>
<div class="sel" style="left:1188px;top:448px;width:81px;height:21px;background:#fff;"></div><svg class="abs" style="left:1256px;top:454.9px" width="10" height="8" viewBox="0 0 10 8"><path d="M1.7 1.9L4.7 5.1L7.7 1.9" fill="none" stroke="#4a4a4a" stroke-width="1.8"/></svg>
<div class="sel" style="left:1275px;top:448px;width:80.5px;height:21px;background:#fff;"></div><svg class="abs" style="left:1342.5px;top:454.9px" width="10" height="8" viewBox="0 0 10 8"><path d="M1.7 1.9L4.7 5.1L7.7 1.9" fill="none" stroke="#4a4a4a" stroke-width="1.8"/></svg>
<div class="tx" style="left:1022px;top:477.2px;letter-spacing:-0.125px;">10</div>
<div class="tx" style="left:1110px;top:477.2px;letter-spacing:-0.125px;">45</div>
<div class="tx" style="left:1237px;top:477.2px;letter-spacing:0.289px;">11</div>
<div class="tx" style="left:1324.5px;top:477.2px;letter-spacing:-0.125px;">00</div>
<div class="tx" style="left:981px;top:498px;letter-spacing:-0.161px;">Εάν αφήσετε κενές τις τιμές θα χρησιμοποιηθούν οι ώρες της πρώτης περιόδου</div>
<div class="gb" style="left:953px;top:530px;width:453px;height:74px"></div>
<div class="abs" style="left:959px;top:525px;width:52px;height:12px;background:#f0f0f0"></div>
<div class="tx" style="left:961.5px;top:524px;letter-spacing:-0.227px;">Διάλειμμα</div>
<div class="tx" style="left:1000.5px;top:560px;letter-spacing:-0.118px;">Κείμενο εκτυπώσεων:</div>
<div class="inp" style="left:1139.5px;top:553px;width:212px;height:20px"></div>
<div class="gb" style="left:953px;top:610.7px;width:453px;height:105.8px"></div>
<div class="abs" style="left:959px;top:606px;width:60px;height:12px;background:#f0f0f0"></div>
<div class="tx" style="left:961.5px;top:605px;letter-spacing:-0.317px;">Εκτυπώσεις</div>
<div class="cb" style="left:968px;top:632.2px"></div>
<div class="tx" style="left:983.5px;top:632.1px;letter-spacing:-0.071px;">Εκτύπωση περιόδ./διαλείμ. στο συνολ. ωρολόγιο</div>
<div class="cb" style="left:968px;top:653.1px"><svg width="11" height="11" style="position:absolute;left:0;top:0" viewBox="0 0 11 11"><path d="M1.7 5.3L4.3 8.2L9.3 2.1" fill="none" stroke="#000" stroke-width="2"/></svg></div>
<div class="tx" style="left:983.5px;top:653.0px;letter-spacing:-0.13px;">Εκτύπωση περιόδ./διαλείμ. στο ωρολόγιο εκπαιδευ</div>
<div class="cb" style="left:968px;top:673.5px"><svg width="11" height="11" style="position:absolute;left:0;top:0" viewBox="0 0 11 11"><path d="M1.7 5.3L4.3 8.2L9.3 2.1" fill="none" stroke="#000" stroke-width="2"/></svg></div>
<div class="tx" style="left:983.5px;top:673.4px;letter-spacing:-0.103px;">Εκτύπωση περιόδ./διαλείμ. στο ωρολόγιο τμημάτω</div>
<div class="cb" style="left:968px;top:693.2px"><svg width="11" height="11" style="position:absolute;left:0;top:0" viewBox="0 0 11 11"><path d="M1.7 5.3L4.3 8.2L9.3 2.1" fill="none" stroke="#000" stroke-width="2"/></svg></div>
<div class="tx" style="left:983.5px;top:693.1px;letter-spacing:-0.173px;">Εκτύπωση της περιόδου στο ωρ. προγρ. των αιθου</div>
<div class="red" style="left:963px;top:628.3px;width:264.7px;height:21.6px"></div>
<div class="tx" style="left:970.5px;top:726px;letter-spacing:-0.455px;">Εκτύπωση</div>
<div class="abs" style="left:968px;top:740px;width:80px;height:8px;overflow:hidden"><div class="tx" style="left:2.5px;top:0px;letter-spacing:0.1px">διαλειμμάτων:</div></div>
<div class="sel" style="left:1083px;top:722.5px;width:138px;height:20.0px;"></div><svg class="abs" style="left:1208px;top:729.4px" width="10" height="8" viewBox="0 0 10 8"><path d="M1.7 1.9L4.7 5.1L7.7 1.9" fill="none" stroke="#4a4a4a" stroke-width="1.8"/></svg>
<div class="abs" style="left:1085.5px;top:725px;width:116px;height:15px;border:1px dotted #222;box-sizing:border-box"></div>
<div class="tx" style="left:1086.5px;top:726px;letter-spacing:-0.08px;">Μόνο για: Κουδούνι 2</div>
<div class="red" style="left:962px;top:718px;width:263px;height:41px"></div>
<div class="cb" style="left:969px;top:769.5px"><svg width="11" height="11" style="position:absolute;left:0;top:0" viewBox="0 0 11 11"><path d="M1.7 5.3L4.3 8.2L9.3 2.1" fill="none" stroke="#000" stroke-width="2"/></svg></div>
<div class="tx" style="left:984.5px;top:768.7px;letter-spacing:-0.162px;">Οι διπλές διδασκαλίες δεν μπορούν να χωριστούν από το δι</div>
<div class="wbtn" style="left:1251px;top:792.7px;width:73px;height:21.299999999999955px;border-color:#3399ff;box-shadow:inset 0 0 0 1px #bfe0ff;"><span style="top:3.1px;letter-spacing:-0.953px">OK</span></div>
<div class="wbtn" style="left:1332px;top:792.7px;width:72.5px;height:21.299999999999955px;"><span style="top:3.1px;letter-spacing:-0.23px">Ακύρωση</span></div>
</div>
</body></html>
